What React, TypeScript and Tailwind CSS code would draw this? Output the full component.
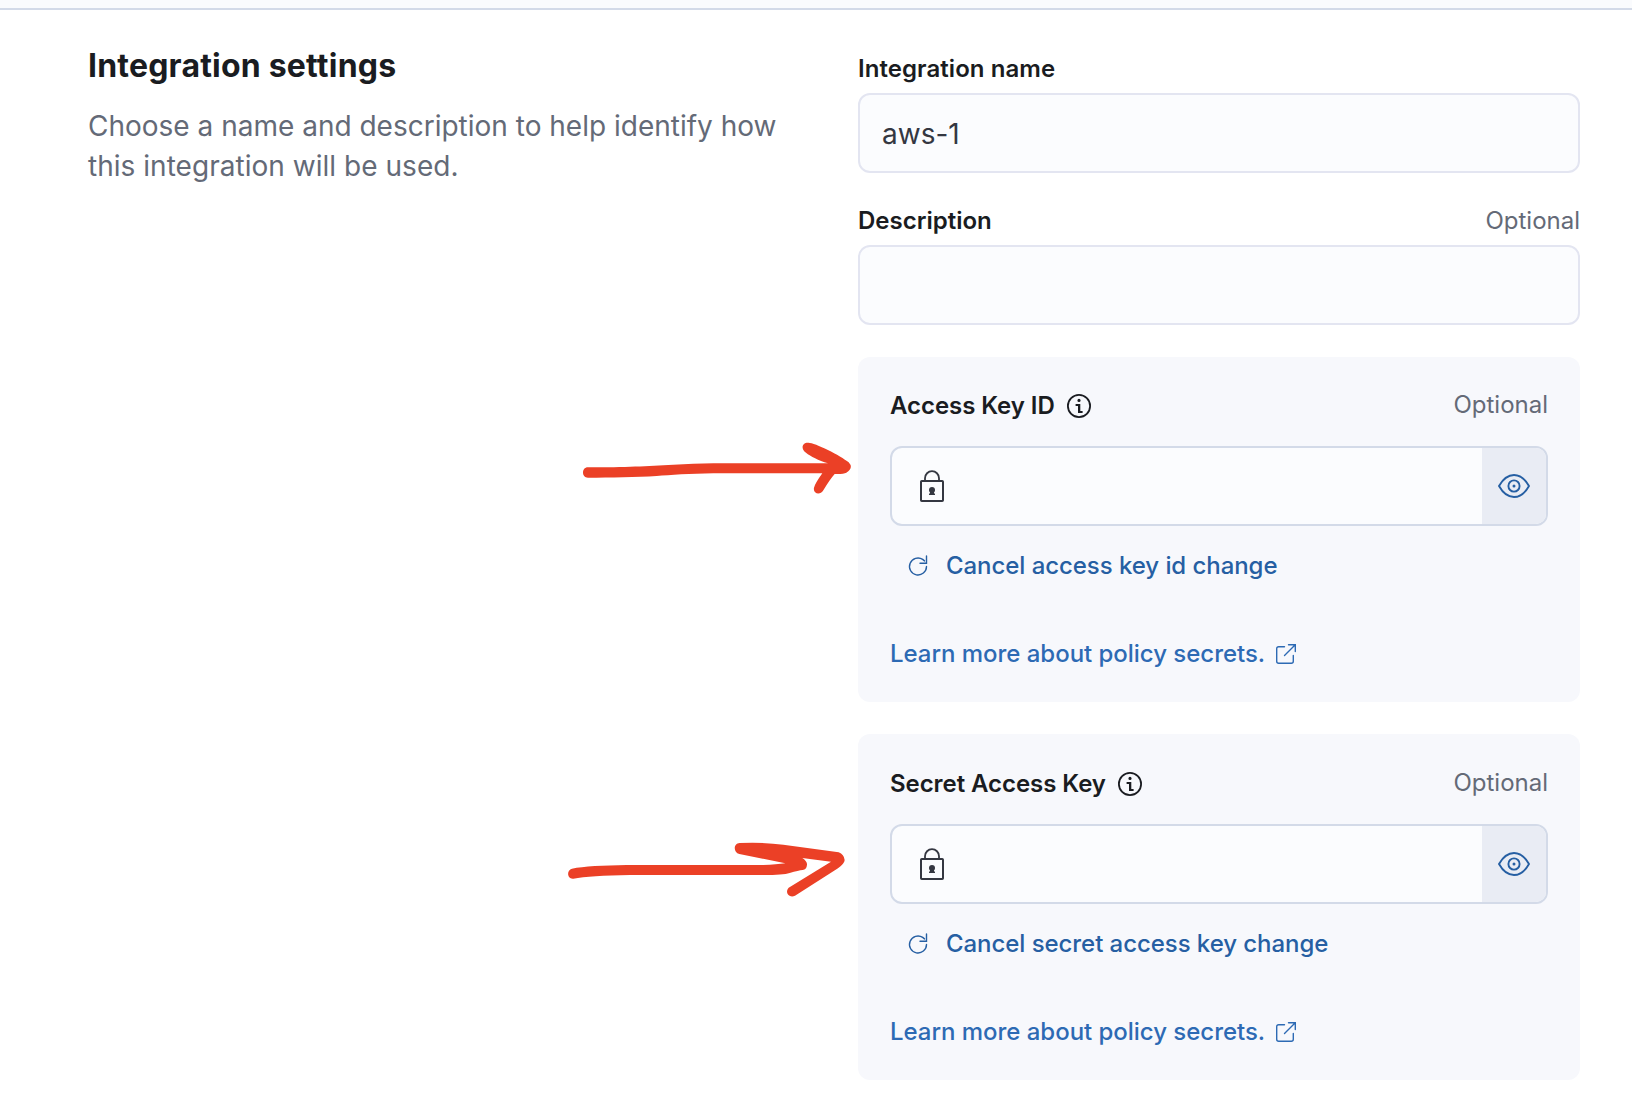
import type { ReactNode } from "react";

function InfoIcon() {
  return (
    <svg className="size-8 shrink-0" viewBox="0 0 16 16" fill="#1a1c21">
      <path d="M8 14A6 6 0 1 1 8 2a6 6 0 0 1 0 12Zm0-.9A5.100 5.100 0 1 0 8 2.900a5.100 5.100 0 0 0 0 10.200Z" />
      <circle cx="8" cy="5.200" r="0.780" />
      <path d="M6.300 7h2.350v3.500h1.150v1H7.500V8H6.300V7Z" />
    </svg>
  );
}

function LockIcon() {
  return (
    <svg className="size-8 shrink-0" viewBox="0 0 32 32" fill="none" stroke="#343741" strokeWidth="2">
      <path d="M9 10.5V8.2a7 7 0 0 1 14 0v2.3" strokeWidth="1.8" />
      <rect x="5" y="11" width="22" height="20" rx="0.8" />
      <path d="M14 20h4v3.500h1V25h-6v-1.500h1Z" fill="#343741" stroke="none" />
      <circle cx="16" cy="20" r="3" fill="#343741" stroke="none" />
    </svg>
  );
}

function EyeIcon() {
  return (
    <svg className="size-8 shrink-0" viewBox="0 0 32 32" fill="none" stroke="#265fa3" strokeWidth="1.9">
      <path d="M1 16C5.200 8.600 10.200 5 16 5s10.800 3.600 15 11c-4.200 7.400-9.200 11-15 11S5.200 23.400 1 16Z" strokeLinejoin="round" />
      <circle cx="16" cy="16" r="5.600" />
      <circle cx="16" cy="16" r="1.500" fill="#265fa3" stroke="none" />
    </svg>
  );
}

function RefreshIcon() {
  return (
    <svg className="size-6 shrink-0" viewBox="0 0 24 24" fill="none" stroke="#265fa3" strokeWidth="1.400" strokeLinecap="round">
      <path d="M20.500 12.500A8.500 8.500 0 1 1 16.700 5.400L18.500 6.900" />
      <path d="M20.500 2v7.200H14" />
    </svg>
  );
}

function PopoutIcon() {
  return (
    <svg className="size-6 shrink-0" viewBox="0 0 24 24" fill="none" stroke="#2d6ab4" strokeWidth="1.400" strokeLinecap="round">
      <path d="M10.500 4.700H4.700a2 2 0 0 0-2 2v12.600a2 2 0 0 0 2 2h12.600a2 2 0 0 0 2-2V13.500" />
      <path d="M14.500 2.700h6.800v6.800M21 3 10.500 13.500" />
    </svg>
  );
}

function Label({ children }: { children: ReactNode }) {
  return <span className="text-2xl leading-8 font-semibold whitespace-nowrap text-[#1a1c21]">{children}</span>;
}

function Optional() {
  return <span className="text-2xl leading-8 text-[#646a77]">Optional</span>;
}

function TextField({ value }: { value: string }) {
  return (
    <div className="flex h-20 items-center rounded-xl border-2 border-[#e3e5f1] bg-[#fbfcfe] px-[22px] pt-0.5 text-[28px] text-[#343741]">
      {value}
    </div>
  );
}

function SecretPanel({ label, action, className }: { label: string; action: string; className: string }) {
  return (
    <section className={`flex flex-col rounded-xl bg-[#f7f8fc] px-8 ${className}`}>
      <div className="flex items-start justify-between">
        <div className="flex h-8 items-center gap-2 tracking-[-0.06px]">
          <Label>{label}</Label>
          <InfoIcon />
        </div>
        <div className="-mt-px">
          <Optional />
        </div>
      </div>
      <div className="mt-6 flex h-20 overflow-hidden rounded-xl border-2 border-[#d3dae8] bg-[#fbfcfe]">
        <div className="flex flex-1 items-center pl-6">
          <LockIcon />
        </div>
        <button className="flex w-16 items-center justify-center bg-[#e9ecf4]">
          <EyeIcon />
        </button>
      </div>
      <button className="mt-6 flex h-8 items-center gap-4 self-start pl-4 text-2xl font-medium tracking-[-0.06px] whitespace-nowrap text-[#265fa3]">
        <RefreshIcon />
        {action}
      </button>
      <a className="mt-14 flex h-8 items-center gap-[9px] self-start text-2xl font-medium tracking-[-0.03px] whitespace-nowrap text-[#2d6ab4]">
        Learn more about policy secrets.
        <PopoutIcon />
      </a>
    </section>
  );
}

function UpperArrow() {
  return (
    <svg className="pointer-events-none absolute top-[420px] left-[560px] h-[100px] w-[320px]" viewBox="0 0 960 300" fill="#eb4026">
      <path d="M84 142C200 142 260 138 340 134Q400 131 460 130H804C775 121 752 109 738 98C720 85 728 67 744 68C760 66 842 106 866 127Q882 144 859 158Q850 163 824 162Q809 179 790 211C780 228 758 221 762 203Q766 189 787 160H460C390 161 330 165 290 168C230 172 150 173 84 173C64 173 64 142 84 142Z" />
    </svg>
  );
}

function LowerArrow() {
  return (
    <svg className="pointer-events-none absolute top-[820px] left-[550px] h-[100px] w-[320px]" viewBox="0 0 960 300" fill="#eb4026">
      <path d="M66 146C100 139 160 136 230 135H640Q680 134 706 130L568 102C549 97 550 70 569 69Q640 66 700 74L866 97Q882 103 884 120Q884 130 864 145L735 227C718 236 703 217 716 203L843 125L757 114Q772 124 771 134Q770 148 758 150Q746 151 719 159Q700 165 640 165H240Q120 167 70 176C52 178 48 151 66 146Z" />
    </svg>
  );
}

export default function App() {
  return (
    <div className="relative h-[1102px] w-[1632px] overflow-hidden bg-white font-['Inter',sans-serif]">
      <div className="h-[10px] border-b-2 border-[#d3dae8] bg-[#fafbfd]" />
      <main className="flex justify-between pr-[52px] pl-[88px]">
        <div className="w-[722px] pt-9">
          <h1 className="text-[32px] leading-10 font-bold tracking-[0.2px] text-[#1a1c21]">Integration settings</h1>
          <p className="mt-5 text-[28px] leading-10 text-[#646a77]">
            Choose a name and description to help identify how
            <br />
            <span className="tracking-[0.03px]">this integration will be used.</span>
          </p>
        </div>
        <div className="flex w-[722px] flex-col pt-[43px]">
          <div className="flex tracking-[0.06px]">
            <Label>Integration name</Label>
          </div>
          <div className="mt-2">
            <TextField value="aws-1" />
          </div>
          <div className="mt-8 mb-2 flex justify-between">
            <Label>Description</Label>
            <Optional />
          </div>
          <TextField value="" />
          <SecretPanel className="mt-8 h-[345px] pt-[33px]" label="Access Key ID" action="Cancel access key id change" />
          <SecretPanel className="mt-8 h-[346px] pt-[34px]" label="Secret Access Key" action="Cancel secret access key change" />
        </div>
      </main>
      <UpperArrow />
      <LowerArrow />
    </div>
  );
}
